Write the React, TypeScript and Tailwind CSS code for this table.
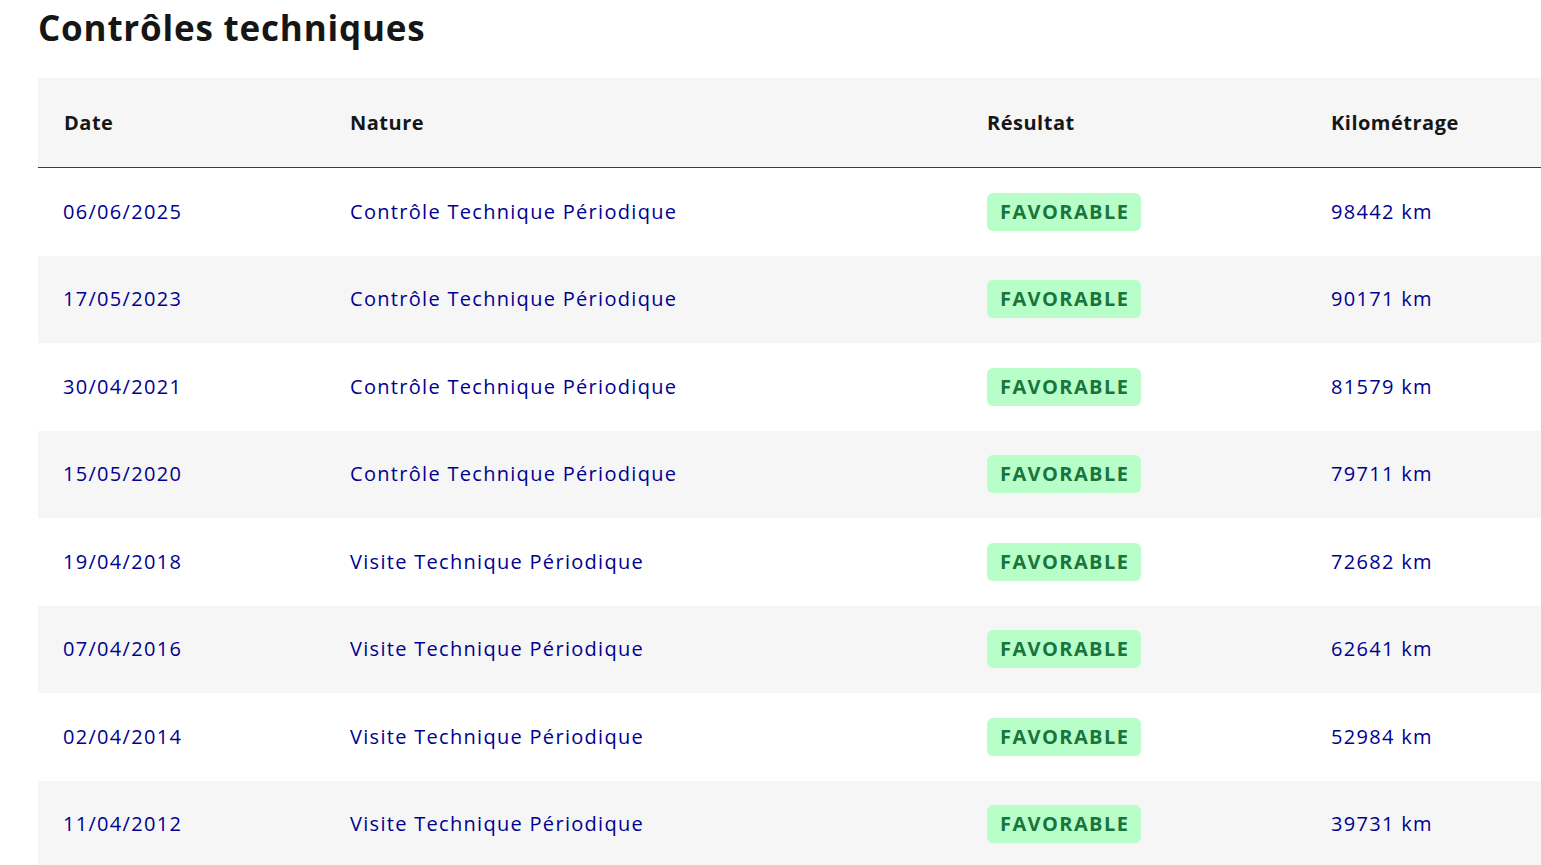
import React from "react";

type Row = { date: string; nature: string; km: string };

const rows: Row[] = [
  { date: "06/06/2025", nature: "Contrôle Technique Périodique", km: "98442 km" },
  { date: "17/05/2023", nature: "Contrôle Technique Périodique", km: "90171 km" },
  { date: "30/04/2021", nature: "Contrôle Technique Périodique", km: "81579 km" },
  { date: "15/05/2020", nature: "Contrôle Technique Périodique", km: "79711 km" },
  { date: "19/04/2018", nature: "Visite Technique Périodique", km: "72682 km" },
  { date: "07/04/2016", nature: "Visite Technique Périodique", km: "62641 km" },
  { date: "02/04/2014", nature: "Visite Technique Périodique", km: "52984 km" },
  { date: "11/04/2012", nature: "Visite Technique Périodique", km: "39731 km" },
];

const cols = "grid grid-cols-[287px_637px_344px_1fr]";

const App = () => {
  return (
    <div className="bg-white min-h-screen pl-[38px] font-['Open_Sans',sans-serif] overflow-hidden">
      <h1 className="text-[35px] font-bold text-[#161616] leading-[56px] tracking-[0.8px] h-[78px]">
        Contrôles techniques
      </h1>
      <div className="w-[1503px]">
        <div className={`${cols} bg-[#f6f6f6] h-[90px] items-center border-b border-[#3a3a3a] text-[20px] font-bold tracking-[0.5px] text-[#161616]`}>
          <div className="pl-[26px]">Date</div>
          <div className="pl-[25px]">Nature</div>
          <div className="pl-[25px]">Résultat</div>
          <div className="pl-[25px]">Kilométrage</div>
        </div>
        {rows.map((r, i) => (
          <div
            key={r.date}
            className={`${cols} h-[87.5px] items-center text-[20px] tracking-[1.3px] text-[#000091] ${i % 2 === 1 ? "bg-[#f6f6f6]" : "bg-white"}`}
          >
            <div className="pl-[25px]">{r.date}</div>
            <div className="pl-[25px]">{r.nature}</div>
            <div className="pl-[25px]">
              <span className="inline-flex items-center h-[38px] pl-[13px] pr-[12px] rounded-[6px] bg-[#b8fec9] text-[#18753c] font-bold uppercase tracking-[1.4px]">
                Favorable
              </span>
            </div>
            <div className="pl-[25px]">{r.km}</div>
          </div>
        ))}
      </div>
    </div>
  );
};

export default App;
